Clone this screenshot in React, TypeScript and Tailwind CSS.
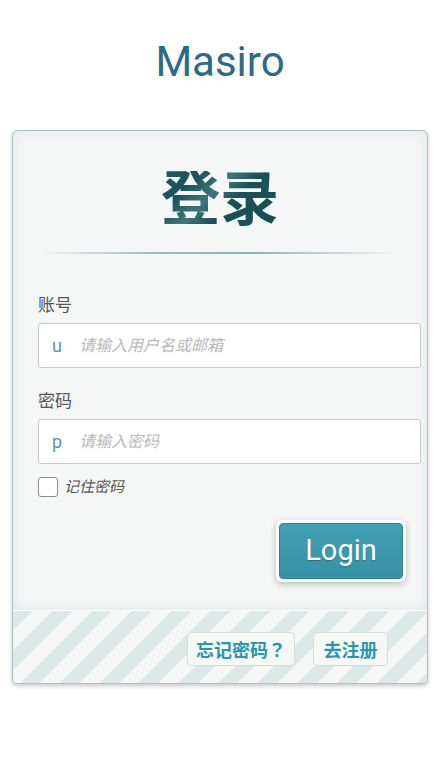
import React from 'react';

const cjk = "font-['Roboto','Noto_Sans_CJK_SC',sans-serif]";

const Field: React.FC<{ label: string; prefix: string; placeholder: string; type?: string; top: string }> = ({
  label,
  prefix,
  placeholder,
  type = 'text',
  top,
}) => (
  <div className={top}>
    <div className="h-[24px] text-[17px] leading-[24px] text-[#555]">{label}</div>
    <label className="mt-[6px] flex h-[45px] items-center rounded-[3px] border-[1.5px] border-[#c9c9c9] bg-white">
      <span className="w-[40px] pl-[13px] text-[18px] text-[#5f95a6]">{prefix}</span>
      <input
        type={type}
        placeholder={placeholder}
        className="h-full flex-1 bg-transparent text-[16px] italic text-[#444] outline-none placeholder:text-[#b9b9b9]"
      />
    </label>
  </div>
);

const App: React.FC = () => {
  return (
    <div className={`min-h-[770px] bg-white ${cjk}`}>
      <h1 className="pt-[36px] text-center text-[42px] leading-[52px] text-[#2e6a85]">Masiro</h1>

      <div className="mx-[12px] mt-[42px] overflow-hidden rounded-[5px] border border-[#a9c4c8] bg-[#f5f6f6] shadow-[0_2px_4px_rgba(0,0,0,0.22)]">
        <div className="pb-[28px] pt-[40px] shadow-[inset_0_0_12px_rgba(170,195,200,0.35)]">
          <h2 className="bg-[linear-gradient(135deg,#2f666b_0%,#1a5359_40%,#40767b_47%,#185157_53%,#134a50_100%)] bg-clip-text text-center text-[59px] font-bold leading-[58px] text-transparent">
            登录
          </h2>
          <div className="mx-auto mt-[23px] h-[2px] w-[360px] bg-[linear-gradient(90deg,rgba(157,188,194,0)_0%,#9dbcc2_30%,#8fb2b9_60%,rgba(157,188,194,0)_100%)]" />

          <div className="pl-[25px] pr-[6px]">
            <Field top="mt-[39px]" label="账号" prefix="u" placeholder="请输入用户名或邮箱" />
            <Field top="mt-[21px]" label="密码" prefix="p" placeholder="请输入密码" type="password" />

            <label className="mt-[13px] flex h-[20px] items-center gap-[6px]">
              <input
                type="checkbox"
                className="h-[20px] w-[20px] appearance-none rounded-[3px] border-[1.5px] border-[#8a8a8a] bg-white"
              />
              <span className="text-[15px] italic text-[#555]">记住密码</span>
            </label>

            <div className="mt-[23px] flex justify-end pr-[15px]">
              <button className="rounded-[6px] bg-white p-[3px] shadow-[0_2px_6px_rgba(0,0,0,0.25)]">
                <span className="flex h-[56px] w-[124px] items-center justify-center rounded-[4px] border border-[#2f8499] bg-[linear-gradient(180deg,#40a0b5,#3891a6)] text-[29px] text-white [text-shadow:0_1px_1px_rgba(0,0,0,0.25)]">
                  Login
                </span>
              </button>
            </div>
          </div>
        </div>

        <div className="flex h-[73px] justify-end gap-[18px] border-t border-white bg-[repeating-linear-gradient(135deg,#dde8e9_0px,#dde8e9_14px,#f5f6f6_14px,#f5f6f6_28px)] pr-[39px] pt-[21px] font-['Noto_Sans_CJK_SC',sans-serif]">
          <a className="flex h-[34px] w-[108px] items-center justify-center rounded-[4px] border border-[#d3dfdf] bg-[#f6f8f4] text-[18px] font-bold text-[#2797b0]">
            忘记密码<span className="font-['Noto_Sans_CJK_TC',sans-serif]">？</span>
          </a>
          <a className="flex h-[34px] w-[75px] items-center justify-center rounded-[4px] border border-[#d3dfdf] bg-[#f6f8f4] text-[18px] font-bold text-[#2797b0]">
            去注册
          </a>
        </div>
      </div>
    </div>
  );
};

export default App;
